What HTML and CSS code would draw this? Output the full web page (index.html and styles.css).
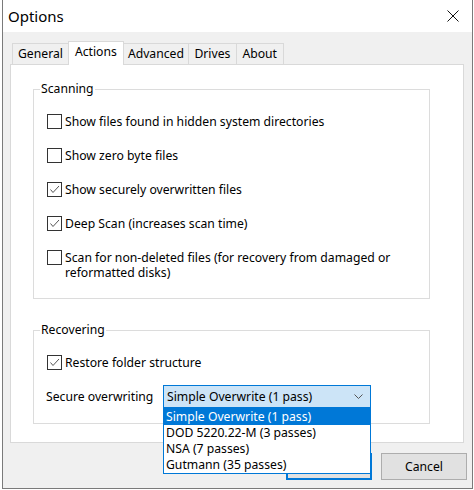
FILE: index.html
```html
<!DOCTYPE html>
<html>
<head>
<meta charset="utf-8">
<link rel="stylesheet" href="styles.css">
</head>
<body>
<div class="window">
  <div class="titlebar">
    <span class="title">Options</span>
    <svg class="close" width="12" height="12" viewBox="0 0 12 12"><path d="M0.5 0.5 L11.5 11.5 M11.5 0.5 L0.5 11.5" stroke="#111" stroke-width="1" fill="none"/></svg>
  </div>
  <div class="body">
    <div class="tabs">
      <div class="tab">General</div>
      <div class="tab active">Actions</div>
      <div class="tab">Advanced</div>
      <div class="tab wide">Drives</div>
      <div class="tab wide">About</div>
    </div>
    <div class="panel">
      <fieldset class="group">
        <legend>Scanning</legend>
        <label class="check"><span class="box"></span><span class="text">Show files found in hidden system directories</span></label>
        <label class="check"><span class="box"></span><span class="text">Show zero byte files</span></label>
        <label class="check"><span class="box checked"><svg viewBox="0 0 13 13"><path d="M2.5 6.5 L5 9.5 L11 3" stroke="#555" stroke-width="1" fill="none"/></svg></span><span class="text">Show securely overwritten files</span></label>
        <label class="check"><span class="box checked"><svg viewBox="0 0 13 13"><path d="M2.5 6.5 L5 9.5 L11 3" stroke="#555" stroke-width="1" fill="none"/></svg></span><span class="text">Deep Scan (increases scan time)</span></label>
        <label class="check"><span class="box"></span><span class="text"><span class="line">Scan for non-deleted files (for recovery from damaged or</span><span class="line">reformatted disks)</span></span></label>
      </fieldset>
      <fieldset class="group recovering">
        <legend>Recovering</legend>
        <label class="check"><span class="box checked"><svg viewBox="0 0 13 13"><path d="M2.5 6.5 L5 9.5 L11 3" stroke="#555" stroke-width="1" fill="none"/></svg></span><span class="text">Restore folder structure</span></label>
        <div class="overwrite">
          <span class="label">Secure overwriting</span>
          <div class="combo-wrap">
            <div class="combo">
              <span>Simple Overwrite (1 pass)</span>
              <svg class="chev" width="9" height="5" viewBox="0 0 9 5"><path d="M0.5 0.5 L4.5 4.5 L8.5 0.5" stroke="#555" stroke-width="1" fill="none"/></svg>
            </div>
            <ul class="dropdown">
              <li class="sel">Simple Overwrite (1 pass)</li>
              <li>DOD 5220.22-M (3 passes)</li>
              <li>NSA (7 passes)</li>
              <li>Gutmann (35 passes)</li>
            </ul>
          </div>
        </div>
      </fieldset>
    </div>
    <div class="buttons">
      <button class="btn default">OK</button>
      <button class="btn">Cancel</button>
    </div>
  </div>
</div>
</body>
</html>
```
FILE: styles.css
```css
html, body {
  margin: 0;
  padding: 0;
  background: #ffffff;
}
body {
  font-family: "Noto Sans", "Open Sans", sans-serif;
  font-size: 12.2px;
  color: #000;
}
.window {
  margin-left: 2px;
  width: 471px;
  height: 489px;
  box-sizing: border-box;
  border: 1px solid #7a7a7a;
  border-top: none;
  display: flex;
  flex-direction: column;
}
.titlebar {
  height: 32px;
  flex: none;
  background: #fff;
  display: flex;
  align-items: center;
  padding-left: 5px;
}
.title {
  font-size: 15px;
  line-height: 20px;
}
.close {
  margin-left: auto;
  margin-right: 13px;
}
.body {
  flex: 1;
  background: #f0f0f0;
  padding-top: 9px;
  display: flex;
  flex-direction: column;
}
.tabs {
  display: flex;
  align-items: flex-end;
  height: 23px;
  margin-left: 9px;
}
.tab {
  height: 21px;
  box-sizing: border-box;
  border: 1px solid #d9d9d9;
  border-bottom: none;
  padding: 0 4px;
  line-height: 19px;
  background: #f0f0f0;
  margin-left: -1px;
}
.tab:first-child {
  margin-left: 0;
  padding: 0 5px;
}
.tab.wide {
  padding: 0 5.5px;
}
.tab.active {
  height: 24px;
  margin-bottom: -1px;
  background: #fff;
  position: relative;
  z-index: 1;
  line-height: 20px;
  padding: 0 6px;
}
.panel {
  margin-left: 7px;
  width: 454px;
  height: 379px;
  box-sizing: border-box;
  border: 1px solid #d9d9d9;
  background: #fff;
  padding-top: 16px;
  display: flex;
  flex-direction: column;
}
.group {
  margin: 0 0 0 22px;
  width: 397px;
  box-sizing: border-box;
  border: 1px solid #dcdcdc;
  padding: 0 0 18px 13px;
  display: flex;
  flex-direction: column;
}
.group legend {
  margin-left: -7px;
  padding: 0 1px;
  line-height: 16px;
  font-size: 12.2px;
}
.recovering {
  margin-top: 23px;
  padding-bottom: 15px;
}
.check {
  display: flex;
  align-items: flex-start;
  margin-top: 19px;
  line-height: 15px;
}
.check:first-of-type {
  margin-top: 17px;
}
.text {
  display: flex;
  flex-direction: column;
}
.line {
  display: block;
  height: 15px;
}
.box {
  width: 15px;
  height: 15px;
  box-sizing: border-box;
  border: 1px solid #333;
  background: #fff;
  flex: none;
  margin-right: 3px;
  display: flex;
}
.box svg {
  width: 13px;
  height: 13px;
}
.overwrite {
  display: flex;
  align-items: center;
  margin-top: 15px;
  margin-left: -1px;
}
.label {
  width: 117px;
}
.combo-wrap {
  position: relative;
}
.combo {
  width: 208px;
  height: 23px;
  box-sizing: border-box;
  border: 1px solid #0078d7;
  background: #cce4f7;
  display: flex;
  align-items: center;
  padding-left: 3px;
}
.chev {
  margin-left: auto;
  margin-right: 7px;
}
.dropdown {
  position: absolute;
  left: 0;
  top: 100%;
  width: 208px;
  box-sizing: border-box;
  margin: 0;
  padding: 0;
  list-style: none;
  border: 1px solid #0078d7;
  background: #fff;
  z-index: 5;
}
.dropdown li {
  height: 16px;
  line-height: 16px;
  padding-left: 2px;
}
.dropdown li.sel {
  background: #0078d7;
  color: #fff;
}
.buttons {
  display: flex;
  justify-content: flex-end;
  gap: 9px;
  margin-top: 10px;
  margin-right: 5px;
}
.btn {
  width: 86px;
  height: 27px;
  box-sizing: border-box;
  border: 1px solid #adadad;
  background: #e1e1e1;
  font-family: inherit;
  font-size: 12.2px;
  padding: 0;
  color: #000;
}
.btn.default {
  border: 2px solid #0078d7;
}
```
